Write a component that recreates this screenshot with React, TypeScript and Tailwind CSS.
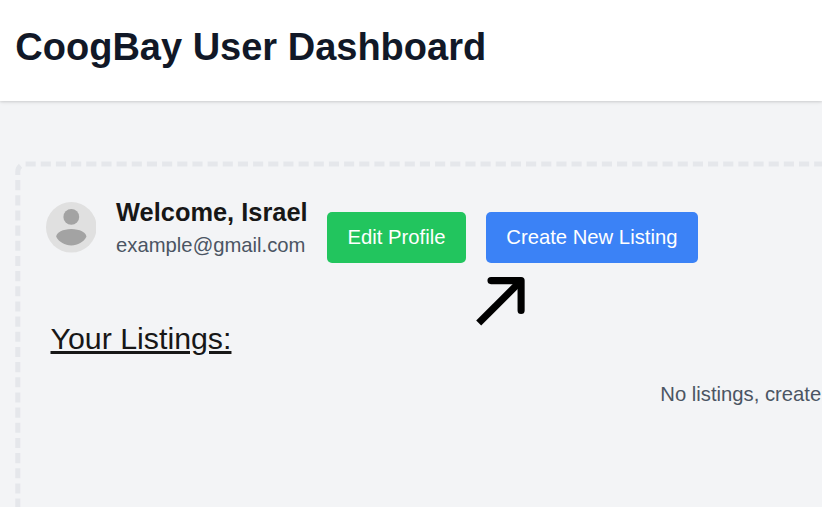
export default function App() {
  return (
    <div className="flex h-[507px] w-full flex-col overflow-hidden bg-[#f3f4f6] font-['Liberation_Sans',Arial,sans-serif] text-[20.25px] leading-[30.3px] text-[#171717]">
      <header className="h-[101px] shrink-0 bg-white px-[15.3px] pt-[25px] shadow-[0_1px_4px_rgba(0,0,0,0.1),0_1px_2px_rgba(0,0,0,0.08)]">
        <h1 className="text-[38px] font-bold leading-[45.5px] whitespace-nowrap text-[#111827]">CoogBay User Dashboard</h1>
      </header>
      <main className="relative mt-[60px] ml-[15px] h-[346px] pt-[36px] pl-[30.5px]">
        <svg className="pointer-events-none absolute top-0 left-0 h-[346px] w-[807px]" viewBox="15 161 807 346" fill="none" stroke="#e5e7eb" strokeWidth="5.06">
          <path d="M25.6 164H840" strokeDasharray="10.11 5.055" />
          <path d="M17.8 175.1V171.6A7.6 7.6 0 0 1 25.4 164" strokeDasharray="10.1 20" />
          <path d="M17.8 180.1V520" strokeDasharray="10.11 5.055" />
        </svg>
        <section className="flex items-start">
          <svg className="mt-[5px] size-[50.6px] shrink-0" viewBox="0 0 50.6 50.6">
            <circle cx="25.3" cy="25.3" r="25.3" fill="#e0e0e0" />
            <circle cx="25.3" cy="14.9" r="7.9" fill="#a3a3a3" />
            <path d="M10.2 34.8C10.2 30.6 17 27 25.3 27S40.4 30.6 40.4 34.8C37.5 40.2 31.9 43.5 25.3 43.5S13.1 40.2 10.2 34.8Z" fill="#a3a3a3" />
          </svg>
          <div className="ml-[20px] w-[191px] whitespace-nowrap">
            <h2 className="text-[25.4px] font-bold leading-[30px]">Welcome, Israel</h2>
            <p className="mt-[3px] text-[#4b5563]">example@gmail.com</p>
          </div>
          <button className="mt-[15px] ml-[20px] h-[50.5px] w-[138.9px] rounded-[5px] bg-[#22c55e] whitespace-nowrap text-white">Edit Profile</button>
          <button className="mt-[15px] ml-[20.1px] h-[50.5px] w-[211.6px] rounded-[5px] bg-[#3b82f6] whitespace-nowrap text-white">Create New Listing</button>
        </section>
        <h2 className="mt-[56px] ml-[5px] text-[30.34px] leading-[40px] underline">Your Listings:</h2>
        <p className="mt-[20px] ml-[614.8px] whitespace-nowrap text-[#4b5563]">No listings, create</p>
        <svg className="absolute top-[109px] left-[455px] size-[62px]" viewBox="0 0 62 62" fill="none" stroke="#000" strokeWidth="7.1" strokeLinecap="round" strokeLinejoin="round">
          <path d="M21 10.6H51.1V40.5" />
          <path d="M51 10.8L8.7 53.1" strokeLinecap="butt" />
        </svg>
      </main>
    </div>
  );
}
